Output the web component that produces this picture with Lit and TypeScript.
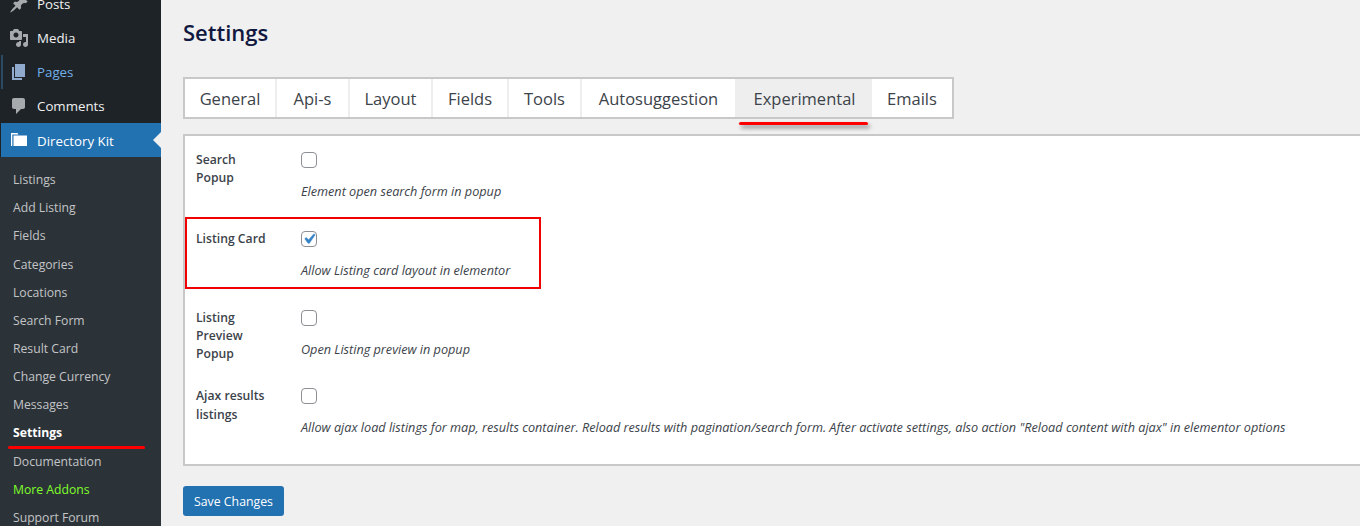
import { LitElement, html, css, svg } from "lit";
import { customElement } from "lit/decorators.js";

const topMenu = [
  { label: "Posts", icon: "posts" },
  { label: "Media", icon: "media" },
  { label: "Pages", icon: "pages", cls: "blue" },
  { label: "Comments", icon: "comments" },
];
const sub = ["Listings","Add Listing","Fields","Categories","Locations","Search Form","Result Card","Change Currency","Messages","Settings","Documentation","More Addons","Support Forum"];
const tabs = [
  { t: "General", w: 92 },
  { t: "Api-s", w: 73 },
  { t: "Layout", w: 83 },
  { t: "Fields", w: 76 },
  { t: "Tools", w: 73 },
  { t: "Autosuggestion", w: 155 },
  { t: "Experimental", w: 135 },
  { t: "Emails", w: 80 },
];
const rows = [
  { label: "Search Popup", w: 60, desc: "Element open search form in popup", checked: false },
  { label: "Listing Card", w: 90, desc: "Allow Listing card layout in elementor", checked: true },
  { label: "Listing Preview Popup", w: 60, desc: "Open Listing preview in popup", checked: false },
  { label: "Ajax results listings", w: 90, desc: 'Allow ajax load listings for map, results container. Reload results with pagination/search form. After activate settings, also action "Reload content with ajax" in elementor options', checked: false },
];
const icons: Record<string, unknown> = {
  posts: svg`<path d="M10.440 3.020l1.820-1.820 6.360 6.350-1.830 1.820c-1.050-.68-2.480-.57-3.410.36l-.75.75c-.92.93-1.040 2.350-.35 3.410l-1.830 1.820-2.410-2.410-2.800 2.790c-.42.420-3.380 2.710-3.800 2.290s1.860-3.390 2.280-3.810l2.790-2.790L4.100 9.360l1.830-1.820c1.050.69 2.480.57 3.400-.36l.75-.75c.93-.92 1.050-2.350.36-3.410z"/>`,
  media: svg`<path fill-rule="evenodd" d="M13 11V4c0-.55-.45-1-1-1h-1.670L9 1H5L3.670 3H2c-.55 0-1 .45-1 1v7c0 .55.45 1 1 1h10c.55 0 1-.45 1-1zM7 4.500c1.380 0 2.500 1.120 2.500 2.500S8.380 9.500 7 9.500 4.500 8.380 4.500 7 5.620 4.500 7 4.500zM14 6h5v10.500c0 1.380-1.120 2.500-2.500 2.500S14 17.880 14 16.500s1.120-2.500 2.500-2.500c.17 0 .34.020.5.050V9h-3V6zm-4 8.050V13h2v3.500c0 1.380-1.120 2.500-2.500 2.500S7 17.880 7 16.500 8.120 14 9.500 14c.17 0 .34.020.5.050z"/>`,
  pages: svg`<path d="M6 15V2h10v13H6zm-1 1h8v2H3V5h2v11z"/>`,
  comments: svg`<path d="M5 2h9c1.100 0 2 .9 2 2v7c0 1.100-.9 2-2 2h-2l-5 5v-5H5c-1.100 0-2-.9-2-2V4c0-1.100.9-2 2-2z"/>`,
  folder: svg`<path d="M2 3h6.500l1 1.500H3.300V16H2zM4.500 5.500H18V16H4.500z"/>`,
};

@customElement("app-root")
export class AppRoot extends LitElement {
  static styles = css`
    :host { display: flex; width: 1360px; height: 526px; overflow: hidden; position: relative; background: #f0f0f0; font-family: "Open Sans", "Noto Sans", sans-serif; color: #3c434a; }
    .side { width: 161px; flex: none; box-sizing: border-box; padding-left: 1px; background: #1d2327; display: flex; flex-direction: column; margin-top: -13px; height: 539px; overflow: hidden; font-size: 13.3px; color: #f0f0f1; }
    .top { height: 34px; display: flex; align-items: center; flex: none; padding-left: 8px; gap: 8px; }
    .top svg { width: 20px; height: 20px; fill: #a7aaad; flex: none; }
    .top.blue { color: #72aee6; }
    .top.blue svg { fill: #8faacc; }
    .top.cur { background: #2271b1; color: #fff; position: relative; }
    .top.cur svg { fill: #fff; }
    .top.cur span { padding-top: 2px; }
    .top.cur::after { content: ""; position: absolute; right: 0; top: 9px; border: 8px solid transparent; border-right-color: #f0f0f0; border-left: 0; }
    .pages-mark { position: relative; }
    .pages-mark::before { content: ""; position: absolute; left: 0; top: 0; bottom: 0; width: 2px; background: #2c4a63; }
    .subs { flex: 1; background: #2c3338; padding-top: 8.500px; margin-left: -1px; padding-left: 1px; }
    .subs div { height: 28.170px; display: flex; align-items: center; padding-left: 12px; font-size: 12.2px; color: #c3c4c7; white-space: nowrap; }
    .subs .on { color: #fff; font-weight: 700; }
    .subs .lime { color: #7fff2a; }
    .main { flex: 1; min-width: 0; padding: 17px 0 0 22px; display: flex; flex-direction: column; align-items: flex-start; }
    h1 { margin: 0 0 30px; font-size: 22px; line-height: 30px; font-weight: 600; color: #101840; }
    .tabs { display: flex; border: 2px solid #c8c8c8; background: #fff; height: 42px; box-sizing: border-box; }
    .tab { box-sizing: border-box; justify-content: center; display: flex; align-items: center; font-size: 16.5px; color: #3c434a; border-right: 2px solid #eee; white-space: nowrap; }
    .tab:last-child { border-right: 0; }
    .tab.act { background: #eeeeee; border-right: 0; }
    .panel { margin-top: 15px; width: 1300px; height: 332px; box-sizing: border-box; background: #fff; border: 2px solid #c8c8c8; border-right: 0; padding: 14px 0 0 11px; }
    .row { display: flex; height: 78.800px; }
    .label { width: 105px; flex: none; font-size: 12.2px; font-weight: 600; line-height: 18.400px; color: #3c434a; padding-top: 1px; }
    .field { display: flex; flex-direction: column; align-items: flex-start; gap: 14px; }
    .cb { width: 16px; height: 16px; box-sizing: border-box; border: 1px solid #8c8f94; border-radius: 4px; background: #fff; margin-top: 2px; display: flex; }
    .cb svg { width: 20px; height: 20px; margin: -3px; flex: none; fill: #3582c4; stroke: #3582c4; stroke-width: .5; }
    .desc { font-style: italic; font-size: 12.660px; line-height: 18px; color: #3c434a; white-space: nowrap; }
    .save { margin-top: 20px; width: 101px; height: 30px; box-sizing: border-box; border: 0; border-radius: 3px; background: #2271b1; color: #fff; font: 12.3px "Open Sans", sans-serif; padding: 0; }
    .mark { position: absolute; background: #ff0000; border-radius: 2px; }
    .mark.tabline { left: 739px; top: 122px; width: 129px; height: 3px; box-shadow: 2px 3px 4px rgba(0,0,0,.45); }
    .mark.sideline { left: 8px; top: 446px; width: 137px; height: 3px; }
    .box { position: absolute; left: 185px; top: 217px; width: 356px; height: 72px; box-sizing: border-box; border: 2px solid #f00000; }
  `;
  render() {
    return html`
      <nav class="side">
        ${topMenu.map(m => html`<div class="top ${m.cls ?? ""} ${m.cls ? "pages-mark" : ""}"><svg viewBox="0 0 20 20">${icons[m.icon]}</svg><span>${m.label}</span></div>`)}
        <div class="top cur"><svg viewBox="0 0 20 20">${icons.folder}</svg><span>Directory Kit</span></div>
        <div class="subs">
          ${sub.map(s => html`<div class="${s === "Settings" ? "on" : s === "More Addons" ? "lime" : ""}">${s}</div>`)}
        </div>
      </nav>
      <main class="main">
        <h1>Settings</h1>
        <div class="tabs">
          ${tabs.map(t => html`<div class="tab ${t.t === "Experimental" ? "act" : ""}" style="width:${t.w}px">${t.t}</div>`)}
        </div>
        <section class="panel">
          ${rows.map(r => html`<div class="row">
            <div class="label"><div style="width:${r.w}px">${r.label}</div></div>
            <div class="field">
              <div class="cb">${r.checked ? html`<svg viewBox="0 0 20 20"><path d="M14.830 4.890l1.340.940-5.810 8.380H9.020L5.780 9.670l1.340-1.250 2.570 2.400z"/></svg>` : ""}</div>
              <div class="desc">${r.desc}</div>
            </div>
          </div>`)}
        </section>
        <button class="save">Save Changes</button>
      </main>
      <div class="mark tabline"></div>
      <div class="mark sideline"></div>
      <div class="box"></div>
    `;
  }
}
